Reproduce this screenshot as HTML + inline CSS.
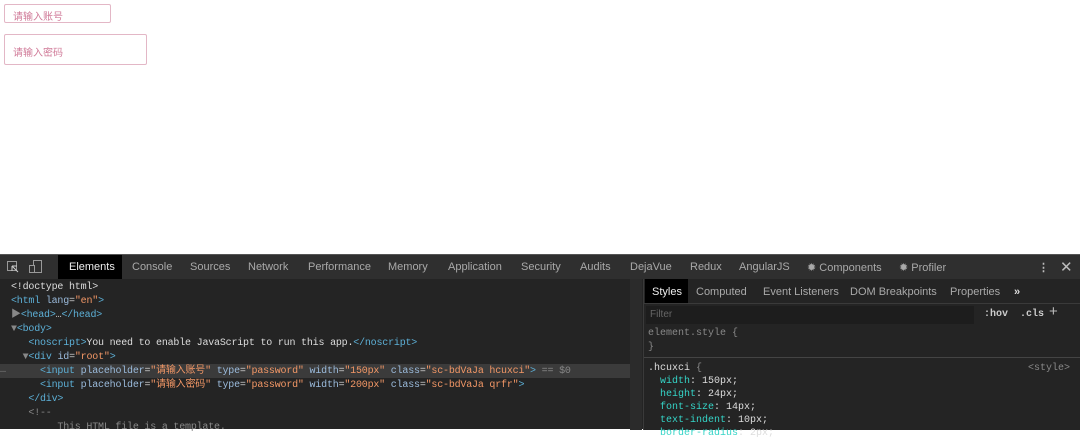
<!DOCTYPE html>
<html><head><meta charset="utf-8"><style>
*{margin:0;padding:0;box-sizing:border-box}
body{width:1080px;height:429px;overflow:hidden;background:#fff;position:relative;font-family:"Liberation Sans","Noto Sans CJK SC",sans-serif}
.in{position:absolute;border:1px solid #e3b7c6;border-radius:2px;color:#d07a98;font-size:10px}
#dt{position:absolute;left:0;top:254px;width:1080px;height:175px;background:#242424;border-top:1px solid #555}
#tb{position:absolute;left:0;top:0;width:1080px;height:24px;background:#2f2f2f;font-size:11px;color:#a9a9a9}
#tb span{position:absolute;top:6px;white-space:nowrap}
.mono{font-family:"Liberation Mono","Noto Sans CJK SC",monospace;font-size:10px;white-space:pre;position:absolute;line-height:14px}
.t{color:#5db0d7}.a{color:#9bbbdc}.v{color:#f29766}.g{color:#888}.w{color:#ddd}
#rp{position:absolute;left:643px;top:24px;width:437px;height:151px;background:#242424;border-left:1px solid #3a3a3a}
#st span{position:absolute;top:7px;font-size:11px;color:#a9a9a9;white-space:nowrap}
.p{color:#35d4c7}
</style></head><body>
<div class="in" style="left:4px;top:4px;width:107px;height:19px;padding:3px 0 0 8px">请输入账号</div>
<div class="in" style="left:4px;top:34px;width:143px;height:31px;padding:9px 0 0 8px">请输入密码</div>

<div id="dt">
<div id="tb">
<svg style="position:absolute;left:7px;top:6px" width="12" height="12"><rect x="0.5" y="0.5" width="9" height="9" fill="none" stroke="#999"/><path d="M5 5l6 6M5 5v5M5 5h5" stroke="#ccc" fill="none"/></svg>
<svg style="position:absolute;left:29px;top:5px" width="14" height="14"><rect x="4.5" y="0.5" width="8" height="12" fill="none" stroke="#999"/><rect x="0.5" y="5.5" width="5" height="7" fill="#2f2f2f" stroke="#999"/></svg>
<div style="position:absolute;left:58px;top:0;width:64px;height:24px;background:#000"></div>
<span style="left:69px;color:#eee">Elements</span>
<span style="left:132px">Console</span>
<span style="left:190px">Sources</span>
<span style="left:248px">Network</span>
<span style="left:308px">Performance</span>
<span style="left:388px">Memory</span>
<span style="left:448px">Application</span>
<span style="left:521px">Security</span>
<span style="left:580px">Audits</span>
<span style="left:630px">DejaVue</span>
<span style="left:690px">Redux</span>
<span style="left:739px">AngularJS</span>
<span style="left:807px">✹ Components</span>
<span style="left:899px">✹ Profiler</span>
<span style="left:1038px;color:#bbb;font-weight:bold">⋮</span>
<span style="left:1060px;top:3px;font-size:15px;color:#bbb">✕</span>
</div>

<div style="position:absolute;left:0;top:109px;width:630px;height:14px;background:#3b3b3b"></div>
<div style="position:absolute;left:630px;top:24px;width:12px;height:151px;background:#2b2b2b"></div>
<div class="mono" style="left:11px;top:26px;color:#ccc;letter-spacing:-0.2px"><span class="w">&lt;!doctype html&gt;</span>
<span class="t">&lt;html</span> <span class="a">lang</span>=<span class="v">"en"</span><span class="t">&gt;</span>
<span class="g">▶</span><span class="t">&lt;head&gt;</span>…<span class="t">&lt;/head&gt;</span>
<span class="g">▼</span><span class="t">&lt;body&gt;</span>
   <span class="t">&lt;noscript&gt;</span><span class="w">You need to enable JavaScript to run this app.</span><span class="t">&lt;/noscript&gt;</span>
  <span class="g">▼</span><span class="t">&lt;div</span> <span class="a">id</span>=<span class="v">"root"</span><span class="t">&gt;</span>
     <span class="t">&lt;input</span> <span class="a">placeholder</span>=<span class="v">"请输入账号"</span> <span class="a">type</span>=<span class="v">"password"</span> <span class="a">width</span>=<span class="v">"150px"</span> <span class="a">class</span>=<span class="v">"sc-bdVaJa hcuxci"</span><span class="t">&gt;</span> <span class="g">== $0</span>
     <span class="t">&lt;input</span> <span class="a">placeholder</span>=<span class="v">"请输入密码"</span> <span class="a">type</span>=<span class="v">"password"</span> <span class="a">width</span>=<span class="v">"200px"</span> <span class="a">class</span>=<span class="v">"sc-bdVaJa qrfr"</span><span class="t">&gt;</span>
   <span class="t">&lt;/div&gt;</span>
   <span class="g">&lt;!--</span>
<span class="g">        This HTML file is a template.</span></div>
<div class="mono g" style="left:0;top:109px">…</div>

<div id="rp">
<div id="st" style="position:absolute;left:0;top:0;width:437px;height:25px;border-bottom:1px solid #3a3a3a">
<div style="position:absolute;left:1px;top:0;width:43px;height:24px;background:#000"></div>
<span style="left:8px;color:#eee">Styles</span>
<span style="left:52px">Computed</span>
<span style="left:119px">Event Listeners</span>
<span style="left:206px">DOM Breakpoints</span>
<span style="left:306px">Properties</span>
<span style="left:370px;color:#ddd;font-weight:bold">»</span>
</div>
<div style="position:absolute;left:2px;top:27px;width:328px;height:18px;background:#1d1d1d;font-size:10px;color:#666;padding:3px 4px">Filter</div>
<div class="mono" style="left:340px;top:29px;color:#ccc;font-weight:bold">:hov  .cls</div>
<div style="position:absolute;left:405px;top:24px;color:#bbb;font-size:15px">+</div>
<div class="mono" style="left:4px;top:48px;color:#888">element.style {
}</div>
<div style="position:absolute;left:0;top:78px;width:437px;height:1px;background:#444"></div>
<div class="mono" style="left:4px;top:83px;color:#ddd;line-height:13px"><span class="w">.hcuxci</span> <span class="g">{</span>
  <span class="p">width</span>: 150px;
  <span class="p">height</span>: 24px;
  <span class="p">font-size</span>: 14px;
  <span class="p">text-indent</span>: 10px;
  <span class="p">border-radius</span>: 2px;</div>
<div class="mono g" style="left:384px;top:83px">&lt;style&gt;</div>
</div>
</div>
</body></html>
